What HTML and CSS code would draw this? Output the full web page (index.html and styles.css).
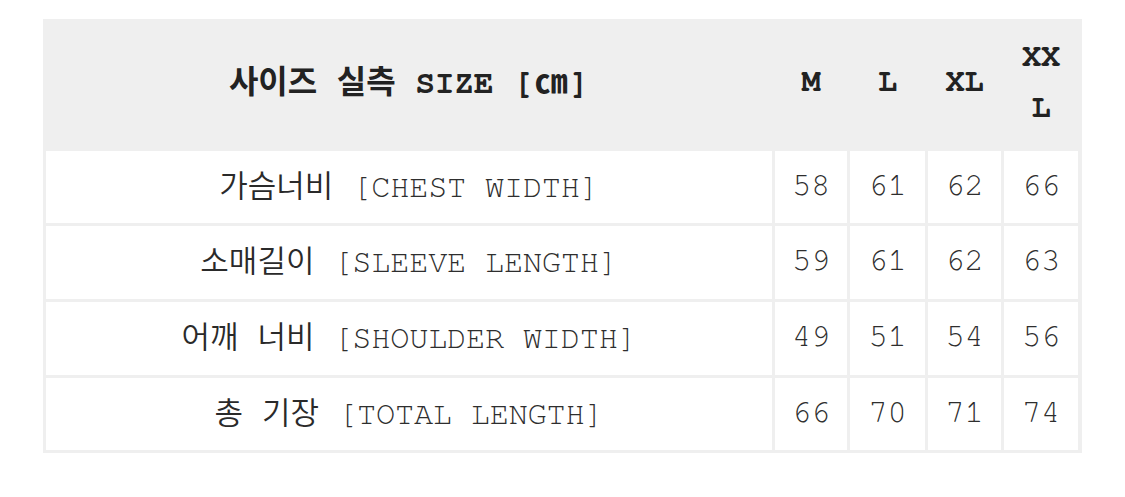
FILE: index.html
```html
<!DOCTYPE html>
<html lang="ko">
<head>
<meta charset="utf-8">
<title>사이즈 실측</title>
<link rel="stylesheet" href="styles.css">
</head>
<body>
<div class="page">
  <div class="size-table">
    <div class="cell head title"><span class="txt"><span class="ko">사이즈</span> <span class="ko">실측</span> SIZE [<span class="unit">㎝</span>]</span></div>
    <div class="cell head">M</div>
    <div class="cell head">L</div>
    <div class="cell head">XL</div>
    <div class="cell head wrap">XXL</div>

    <div class="cell label"><span class="txt"><span class="ko">가슴너비</span> [CHEST WIDTH]</span></div>
    <div class="cell">58</div>
    <div class="cell">61</div>
    <div class="cell">62</div>
    <div class="cell">66</div>

    <div class="cell label"><span class="txt"><span class="ko">소매길이</span> [SLEEVE LENGTH]</span></div>
    <div class="cell">59</div>
    <div class="cell">61</div>
    <div class="cell">62</div>
    <div class="cell">63</div>

    <div class="cell label"><span class="txt"><span class="ko">어깨</span> <span class="ko">너비</span> [SHOULDER WIDTH]</span></div>
    <div class="cell">49</div>
    <div class="cell">51</div>
    <div class="cell">54</div>
    <div class="cell">56</div>

    <div class="cell label"><span class="txt"><span class="ko">총</span> <span class="ko">기장</span> [TOTAL LENGTH]</span></div>
    <div class="cell">66</div>
    <div class="cell">70</div>
    <div class="cell">71</div>
    <div class="cell">74</div>
  </div>
</div>
</body>
</html>
```

FILE: styles.css
```css
html, body {
  margin: 0;
  padding: 0;
  background: #ffffff;
}

.page {
  padding: 19px 0 0 43px;
}

.size-table {
  display: grid;
  grid-template-columns: 726px 72px 75px 73px 74px;
  grid-template-rows: 126px 72px 73px 73px 72px;
  gap: 3px;
  padding: 3px;
  width: 1033px;
  background: #efefef;
  font-family: "Nimbus Mono PS", "Nimbus Mono L", "FreeMono", "Courier New", "Liberation Mono", "Noto Sans CJK KR", monospace;
  font-size: 32px;
  letter-spacing: -0.25px;
  color: #2e2e2e;
}

.cell {
  display: flex;
  align-items: center;
  justify-content: center;
  text-align: center;
  background: #ffffff;
  line-height: 51px;
  white-space: pre;
  padding-bottom: 4px;
}

.ko {
  font-family: "Noto Sans CJK KR", sans-serif;
  font-weight: 350;
  font-size: 31px;
  letter-spacing: 0;
  color: #2a2a2a;
}

.head {
  background: #efefef;
  font-weight: bold;
  color: #222222;
  padding-bottom: 7px;
}

.head .ko {
  font-weight: bold;
  font-size: 32px;
  color: #222222;
}

.title {
  font-size: 33px;
}

.unit {
  font-family: "Noto Sans CJK KR", sans-serif;
  font-weight: bold;
  letter-spacing: 0;
  padding: 0 2px;
}

.wrap {
  white-space: normal;
  word-break: break-all;
  padding: 0 10px 7px;
}
```
